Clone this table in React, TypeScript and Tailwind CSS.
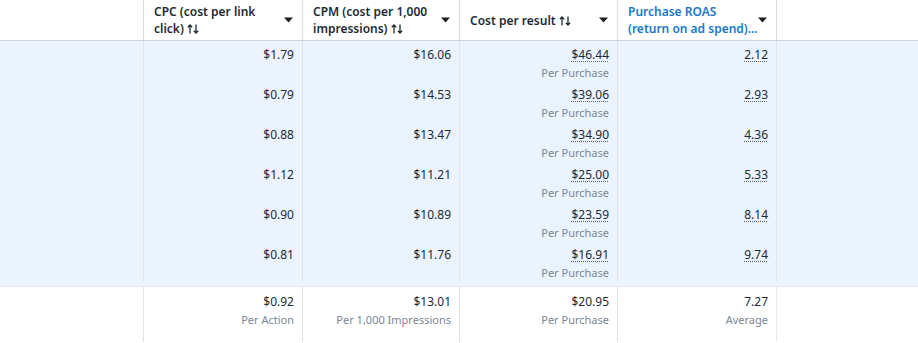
import { ReactNode } from "react";

type Row = {
  cpc: string;
  cpm: string;
  cpr: string;
  roas: string;
};

const rows: Row[] = [
  { cpc: "$1.79", cpm: "$16.06", cpr: "$46.44", roas: "2.12" },
  { cpc: "$0.79", cpm: "$14.53", cpr: "$39.06", roas: "2.93" },
  { cpc: "$0.88", cpm: "$13.47", cpr: "$34.90", roas: "4.36" },
  { cpc: "$1.12", cpm: "$11.21", cpr: "$25.00", roas: "5.33" },
  { cpc: "$0.90", cpm: "$10.89", cpr: "$23.59", roas: "8.14" },
  { cpc: "$0.81", cpm: "$11.76", cpr: "$16.91", roas: "9.74" },
];

const cols = "grid grid-cols-[143px_159px_157px_158px_159px_1fr]";

function Caret() {
  return (
    <svg width="9" height="6" viewBox="0 0 9 6" className="shrink-0">
      <path d="M0 0.5h9L4.5 5.5z" fill="#1c1e21" />
    </svg>
  );
}

// up/down sort arrows
function SortIcon() {
  return (
    <svg width="12" height="10" viewBox="0 0 12 10" className="ml-[3px] inline-block align-[-1px]">
      <path
        d="M3 9.5V1M0.8 3.2L3 1l2.2 2.2M9 0.5V9M6.8 6.8L9 9l2.2-2.2"
        stroke="#1c2b33"
        strokeWidth="1.3"
        fill="none"
      />
    </svg>
  );
}

function HeadCell({ children, blue }: { children: ReactNode; blue?: boolean }) {
  return (
    <div className="flex items-center justify-between border-l border-[#dadde1] pl-[10px] pr-[9px]">
      <div
        className={`text-[12px] font-semibold leading-[17px] ${
          blue ? "text-[#1877c9]" : "text-[#1c2b33]"
        }`}
      >
        {children}
      </div>
      <Caret />
    </div>
  );
}

function Cell({
  value,
  sub,
  dotted,
  top = "pt-[5px]",
}: {
  value: string;
  sub?: string;
  dotted?: boolean;
  top?: string;
}) {
  return (
    <div className={`flex flex-col items-end border-l border-[#dde3ea] pr-[8px] ${top}`}>
      <span
        className={`text-[12px] leading-[17px] text-[#1c2b33] ${
          dotted ? "underline decoration-dotted decoration-[#5a6b78] underline-offset-[2px]" : ""
        }`}
      >
        {value}
      </span>
      {sub && <span className="mt-[3px] text-[11px] leading-[14px] text-[#7a8793]">{sub}</span>}
    </div>
  );
}

export default function App() {
  return (
    <div
      className="h-[343px] w-[918px] overflow-hidden bg-white"
      style={{ fontFamily: '"Noto Sans", Roboto, sans-serif' }}
    >
      <div className={`${cols} h-[41px] border-b border-[#cbd2d9]`}>
        <div />
        <HeadCell>
          CPC (cost per link
          <br />
          click)
          <SortIcon />
        </HeadCell>
        <HeadCell>
          CPM (cost per 1,000
          <br />
          impressions)
          <SortIcon />
        </HeadCell>
        <HeadCell>
          Cost per result
          <SortIcon />
        </HeadCell>
        <HeadCell blue>
          Purchase ROAS
          <br />
          (return on ad spend)...
        </HeadCell>
        <div className="border-l border-[#dadde1]" />
      </div>

      <div className="bg-[#ebf3fe] pb-[5px]">
        {rows.map((r) => (
          <div key={r.cpc + r.cpm} className={`${cols} h-[40px]`}>
            <div />
            <Cell value={r.cpc} />
            <Cell value={r.cpm} />
            <Cell value={r.cpr} sub="Per Purchase" dotted />
            <Cell value={r.roas} dotted />
            <div className="border-l border-[#dde3ea]" />
          </div>
        ))}
      </div>

      <div className={`${cols} h-[56px] border-t border-[#e4e8ed]`}>
        <div />
        <Cell top="pt-[6px]" value="$0.92" sub="Per Action" />
        <Cell top="pt-[6px]" value="$13.01" sub="Per 1,000 Impressions" />
        <Cell top="pt-[6px]" value="$20.95" sub="Per Purchase" />
        <Cell top="pt-[6px]" value="7.27" sub="Average" />
        <div className="border-l border-[#e4e8ed]" />
      </div>
    </div>
  );
}
